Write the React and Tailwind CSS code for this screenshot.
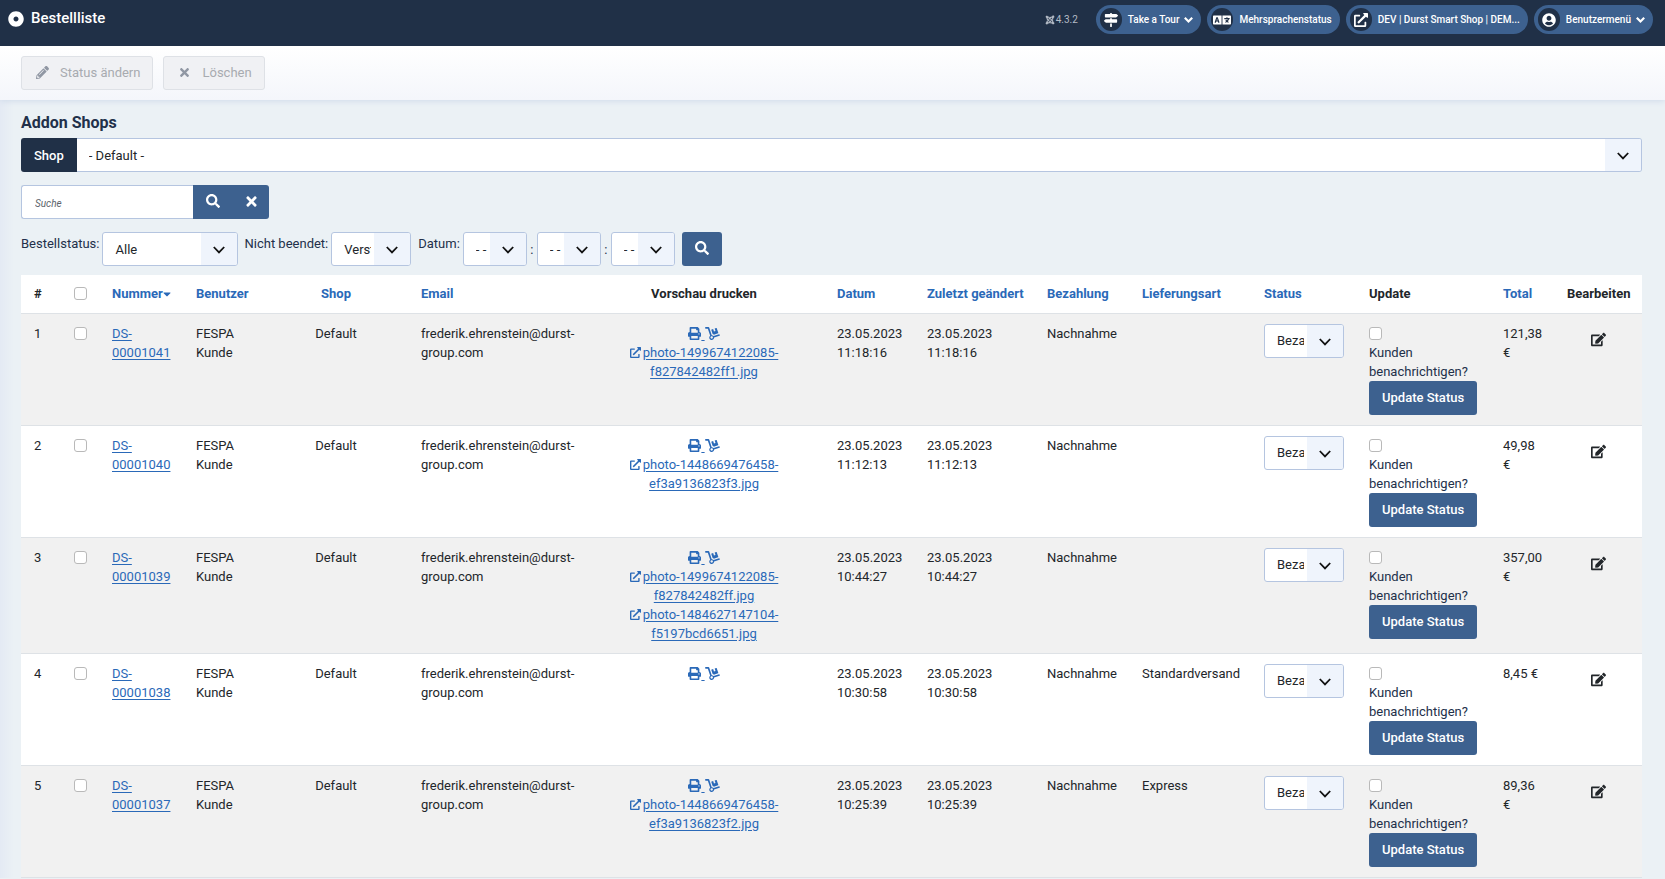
import { useState } from 'react';
import {
  FaCaretDown,
  FaDolly,
  FaDotCircle,
  FaEdit,
  FaExternalLinkAlt,
  FaJoomla,
  FaLanguage,
  FaMapSigns,
  FaPencilAlt,
  FaPrint,
  FaSearch,
  FaTimes,
  FaUserCircle,
} from 'react-icons/fa';

const ORDERS = [
  { id: 1, number: '00001041', date: '23.05.2023 11:18:16', shipping: '', total: '121,38 €', files: ['photo-1499674122085-f827842482ff1.jpg'] },
  { id: 2, number: '00001040', date: '23.05.2023 11:12:13', shipping: '', total: '49,98 €', files: ['photo-1448669476458-ef3a9136823f3.jpg'] },
  { id: 3, number: '00001039', date: '23.05.2023 10:44:27', shipping: '', total: '357,00 €', files: ['photo-1499674122085-f827842482ff.jpg', 'photo-1484627147104-f5197bcd6651.jpg'] },
  { id: 4, number: '00001038', date: '23.05.2023 10:30:58', shipping: 'Standardversand', total: '8,45 €', files: [] },
  { id: 5, number: '00001037', date: '23.05.2023 10:25:39', shipping: 'Express', total: '89,36 €', files: ['photo-1448669476458-ef3a9136823f2.jpg'] },
];

const COLUMNS = [
  { label: '#', width: 'w-[40px]' },
  { label: '', width: 'w-[38px]', check: true },
  { label: 'Nummer', width: 'w-[84px]', sort: true, active: true },
  { label: 'Benutzer', width: 'w-[81px]', sort: true },
  { label: 'Shop', width: 'w-[144px]', sort: true, center: true },
  { label: 'Email', width: 'w-[176px]', sort: true },
  { label: 'Vorschau drucken', width: 'w-[240px]', center: true },
  { label: 'Datum', width: 'w-[90px]', sort: true },
  { label: 'Zuletzt geändert', width: 'w-[120px]', sort: true },
  { label: 'Bezahlung', width: 'w-[95px]', sort: true },
  { label: 'Lieferungsart', width: 'w-[122px]', sort: true },
  { label: 'Status', width: 'w-[105px]', sort: true },
  { label: 'Update', width: 'w-[134px]' },
  { label: 'Total', width: 'w-[64px]', sort: true },
  { label: 'Bearbeiten', width: 'w-[88px]', center: true },
];

// ─── Form Controls ────────────────────────────────────────────────────────────
function Select({ id, label, options, className = '', round = 'rounded-[3px]' }) {
  return (
    <div className={`relative h-[34px] overflow-hidden border border-[#b5c5e0] bg-white ${round} ${className}`}>
      <select
        id={id}
        aria-label={label}
        className="h-full w-full appearance-none truncate bg-transparent pl-3 pr-[39px] text-clip text-[#22262a] outline-none"
      >
        {options.map((o) => <option key={o}>{o}</option>)}
      </select>
      <span className="pointer-events-none absolute inset-y-0 right-0 flex w-9 items-center justify-center bg-[#eff4fc]">
        <svg className="mt-0.5 h-3 w-3" viewBox="0 0 12 12" fill="none" stroke="#111" strokeWidth="1.8">
          <path d="M0.8 3 L6 8.4 L11.2 3" />
        </svg>
      </span>
    </div>
  );
}

function Checkbox({ label, ...props }) {
  return (
    <input
      type="checkbox"
      aria-label={label}
      className="block h-[13px] w-[13px] appearance-none rounded-[3px] border border-[#b9b9b9] bg-white checked:bg-[#3d618f]"
      {...props}
    />
  );
}

// ─── Header ───────────────────────────────────────────────────────────────────
function Pill({ icon: Icon, children, arrow, wide }) {
  return (
    <button className="flex h-[29px] items-center rounded-full bg-[#3d618f] pl-1 pr-2 text-[10px] font-medium text-white">
      <span className="mr-1.5 flex h-[23px] w-[22px] items-center justify-center rounded-full bg-[#203047]">
        <Icon className={wide ? 'h-[18px] w-[18px]' : 'h-[14px] w-[14px]'} />
      </span>
      {children}
      {arrow && (
        <svg className="ml-[5px] h-2 w-[9px]" viewBox="0 0 9 8" fill="none" stroke="currentColor" strokeWidth="2.2">
          <path d="M0.8 1.8 L4.5 5.5 L8.2 1.8" />
        </svg>
      )}
    </button>
  );
}

function Header() {
  return (
    <header className="relative z-10 flex h-[46px] items-start justify-between bg-[#203047] pl-2 pr-3 text-white">
      <div className="flex h-[37px] items-center gap-[7px]">
        <FaDotCircle className="h-4 w-4" />
        <h1 className="text-[15px] font-medium">Bestellliste</h1>
      </div>
      <div className="flex items-center gap-1.5 pt-[5px]">
        <span className="mr-3 flex items-center gap-px text-[10px] text-[#b4bbc6]">
          <FaJoomla className="h-[10px] w-[10px]" />
          4.3.2
        </span>
        <Pill icon={FaMapSigns} arrow>Take a Tour</Pill>
        <Pill icon={FaLanguage} wide>Mehrsprachenstatus</Pill>
        <Pill icon={FaExternalLinkAlt}>DEV | Durst Smart Shop | DEM...</Pill>
        <Pill icon={FaUserCircle} arrow>Benutzermenü</Pill>
      </div>
    </header>
  );
}

function Toolbar() {
  const button = 'flex h-[34px] items-center rounded-[3px] border border-[#dee1e6] bg-[#f0f1f4] pr-3 pb-0.5 pl-[14px] text-[#a8abb0]';
  return (
    <div className="relative flex h-[54px] items-center gap-[10px] bg-linear-to-b from-white to-[#f4f6fb] px-[21px] shadow-[0_1px_6px_#cfdaea]">
      <button disabled className={button}>
        <FaPencilAlt className="mr-[11px] h-[13px] w-[13px] text-[#9097a3]" />
        Status ändern
      </button>
      <button disabled className={button}>
        <FaTimes className="mr-[11px] h-[13px] w-[13px] text-[#9097a3]" />
        Löschen
      </button>
    </div>
  );
}

// ─── Filters ──────────────────────────────────────────────────────────────────
function Filters() {
  const blue = 'flex h-[34px] items-center justify-center bg-[#3d618f] text-white';
  return (
    <>
      <h2 className="mb-[3px] text-[16px] leading-6 font-bold text-[#22304a]">Addon Shops</h2>
      <div className="flex">
        <label htmlFor="shop" className="flex h-[34px] items-center rounded-l-[3px] bg-[#203047] px-[13px] font-medium text-white">Shop</label>
        <Select id="shop" options={['- Default -']} className="grow border-l-0" round="rounded-r-[3px]" />
      </div>

      <div className="mt-[13px] flex">
        <input
          type="text"
          aria-label="Suche"
          placeholder="Suche"
          className="h-[34px] w-[172px] rounded-l-[3px] border border-r-0 border-[#b5c5e0] bg-white pl-[13px] outline-none placeholder:text-[10px] placeholder:text-[#5c636b] placeholder:italic"
        />
        <button aria-label="Suchen" className={`${blue} w-10 pb-0.5`}><FaSearch className="h-[14px] w-[14px]" /></button>
        <button aria-label="Zurücksetzen" className={`${blue} w-9 rounded-r-[3px] pb-0.5`}><FaTimes className="h-[15px] w-[15px]" /></button>
      </div>

      <div className="mt-[13px] mb-[9px] flex items-start text-[#22304a]">
        <label htmlFor="status" className="mr-[3px] pt-0.5">Bestellstatus:</label>
        <Select id="status" options={['Alle']} className="mr-1.5 w-[136px]" />
        <label htmlFor="finished" className="mr-[3px] pt-0.5">Nicht beendet:</label>
        <Select id="finished" options={['Verstecken']} className="mr-[7px] w-20" />
        <label htmlFor="year" className="mr-[3px] pt-0.5">Datum:</label>
        <Select id="year" options={['- -']} className="w-16" />
        <span className="w-[10px] self-center text-center">:</span>
        <Select label="Monat" options={['- -']} className="w-16" />
        <span className="w-[10px] self-center text-center">:</span>
        <Select label="Tag" options={['- -']} className="w-16" />
        <button aria-label="Filtern" className={`${blue} ml-[7px] w-10 rounded-[3px] pb-0.5`}><FaSearch className="h-[14px] w-[14px]" /></button>
      </div>
    </>
  );
}

// ─── Order Table ──────────────────────────────────────────────────────────────
function OrderRow({ order, checked, onToggle }) {
  const cell = 'px-[13px] py-[10px]';
  const link = 'text-[#2a69b8] underline underline-offset-2';
  return (
    <tr className="border-b border-[#dee2e6] align-top odd:bg-[#f1f1f1] even:bg-white">
      <td className={cell}>{order.id}</td>
      <td className={cell}>
        <div className="pt-[3px]">
          <Checkbox label={`Bestellung ${order.number}`} checked={checked} onChange={onToggle} />
        </div>
      </td>
      <td className={cell}><a href="#" className={link}>DS-{order.number}</a></td>
      <td className={cell}>FESPA Kunde</td>
      <td className={`${cell} text-center`}>Default</td>
      <td className="py-[10px] pl-[13px]">frederik.ehrenstein@durst-group.com</td>
      <td className={`${cell} text-center`}>
        <div className="h-[19px]">
          <a href="#" aria-label="Drucken" className={link}><FaPrint className="inline h-[13px] w-[13px] align-[-2px]" /> </a>
          <a href="#" aria-label="Lieferschein" className={link}><FaDolly className="inline h-[13px] w-[15px] align-[-2px]" /></a>
        </div>
        {order.files.map((file) => (
          <a key={file} href="#" className={`${link} block`}>
            <FaExternalLinkAlt className="mr-0.5 inline h-[11px] w-[11px] align-[-1px]" />
            {file}
          </a>
        ))}
      </td>
      <td className={cell}>{order.date}</td>
      <td className={cell}>{order.date}</td>
      <td className={cell}>Nachnahme</td>
      <td className={cell}>{order.shipping}</td>
      <td className={cell}><Select label="Status" options={['Bezahlt']} className="w-20" /></td>
      <td className={cell}>
        <label className="block text-[#22304a]">
          <span className="flex h-[19px] items-center"><Checkbox /></span>
          Kunden benachrichtigen?
        </label>
        <button className="block h-[34px] rounded-[3px] bg-[#3d618f] px-[13px] font-medium whitespace-nowrap text-white">Update Status</button>
      </td>
      <td className={cell}>{order.total}</td>
      <td className={cell}>
        <a href="#" aria-label="Bearbeiten" className="flex h-8 items-center justify-center">
          <FaEdit className="h-[15px] w-[15px]" />
        </a>
      </td>
    </tr>
  );
}

function OrderTable() {
  const [selected, setSelected] = useState([]);
  const all = selected.length === ORDERS.length;

  const toggle = (id) =>
    setSelected((s) => (s.includes(id) ? s.filter((x) => x !== id) : [...s, id]));

  return (
    <table className="w-full table-fixed bg-white">
      <thead>
        <tr className="h-[38px] border-b border-[#dee2e6]">
          {COLUMNS.map((c, i) => (
            <th key={i} className={`${c.width} px-[13px] font-bold whitespace-nowrap ${c.center ? 'text-center' : 'text-left'}`}>
              {c.check && <Checkbox label="Alle auswählen" checked={all} onChange={() => setSelected(all ? [] : ORDERS.map((o) => o.id))} />}
              {c.sort ? (
                <a href="#" className="text-[#2a69b8]">
                  {c.label}
                  {c.active && <FaCaretDown className="inline h-3 w-2 align-[-2px]" />}
                </a>
              ) : c.label}
            </th>
          ))}
        </tr>
      </thead>
      <tbody>
        {ORDERS.map((o) => (
          <OrderRow key={o.id} order={o} checked={selected.includes(o.id)} onToggle={() => toggle(o.id)} />
        ))}
      </tbody>
    </table>
  );
}

// ─── Main Component ───────────────────────────────────────────────────────────
export default function App() {
  return (
    <div className="min-h-screen bg-[#ebf1f5] font-[Roboto,sans-serif] text-[13px] leading-[19px] text-[#22262a]">
      <Header />
      <Toolbar />
      <main className="bg-[linear-gradient(to_right,#e4eaf4,#ebf1f5_14px)] px-[21px] pt-[11px] pr-[23px]">
        <Filters />
        <OrderTable />
      </main>
    </div>
  );
}
